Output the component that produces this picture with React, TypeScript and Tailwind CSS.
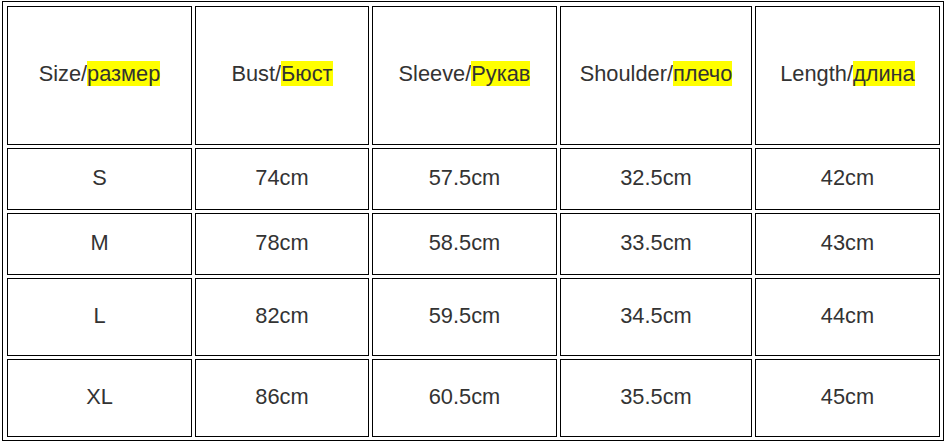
// Таблица размеров — size chart
type Row = { size: string; bust: string; sleeve: string; shoulder: string; length: string };

const HEADERS: { en: string; ru: string }[] = [
  { en: 'Size/', ru: 'размер' },
  { en: 'Bust/', ru: 'Бюст' },
  { en: 'Sleeve/', ru: 'Рукав' },
  { en: 'Shoulder/', ru: 'плечо' },
  { en: 'Length/', ru: 'длина' },
];

const ROWS: Row[] = [
  { size: 'S', bust: '74cm', sleeve: '57.5cm', shoulder: '32.5cm', length: '42cm' },
  { size: 'M', bust: '78cm', sleeve: '58.5cm', shoulder: '33.5cm', length: '43cm' },
  { size: 'L', bust: '82cm', sleeve: '59.5cm', shoulder: '34.5cm', length: '44cm' },
  { size: 'XL', bust: '86cm', sleeve: '60.5cm', shoulder: '35.5cm', length: '45cm' },
];

const cell = 'flex items-center justify-center border border-black pb-[2px]';

export default function App() {
  return (
    <div className="h-[443px] w-[947px] bg-white pl-[2px] pt-[1px] font-['Liberation_Sans',Arial,sans-serif] text-[21.8px] text-[#333]">
      <div className="w-[942px] border border-black pb-[3px] pl-[4px] pr-[3px] pt-[4px]">
        <div className="grid grid-cols-[185px_174px_185px_192px_185px] grid-rows-[139px_62px_62px_78px_78px] gap-[3px]">
          {HEADERS.map((h) => (
            <div key={h.en} className={cell}>
              <span>
                {h.en}
                <span className="bg-[#ffff00]">{h.ru}</span>
              </span>
            </div>
          ))}
          {ROWS.map((r) =>
            [r.size, r.bust, r.sleeve, r.shoulder, r.length].map((v, i) => (
              <div key={`${r.size}-${i}`} className={cell}>
                {v}
              </div>
            )),
          )}
        </div>
      </div>
    </div>
  );
}
